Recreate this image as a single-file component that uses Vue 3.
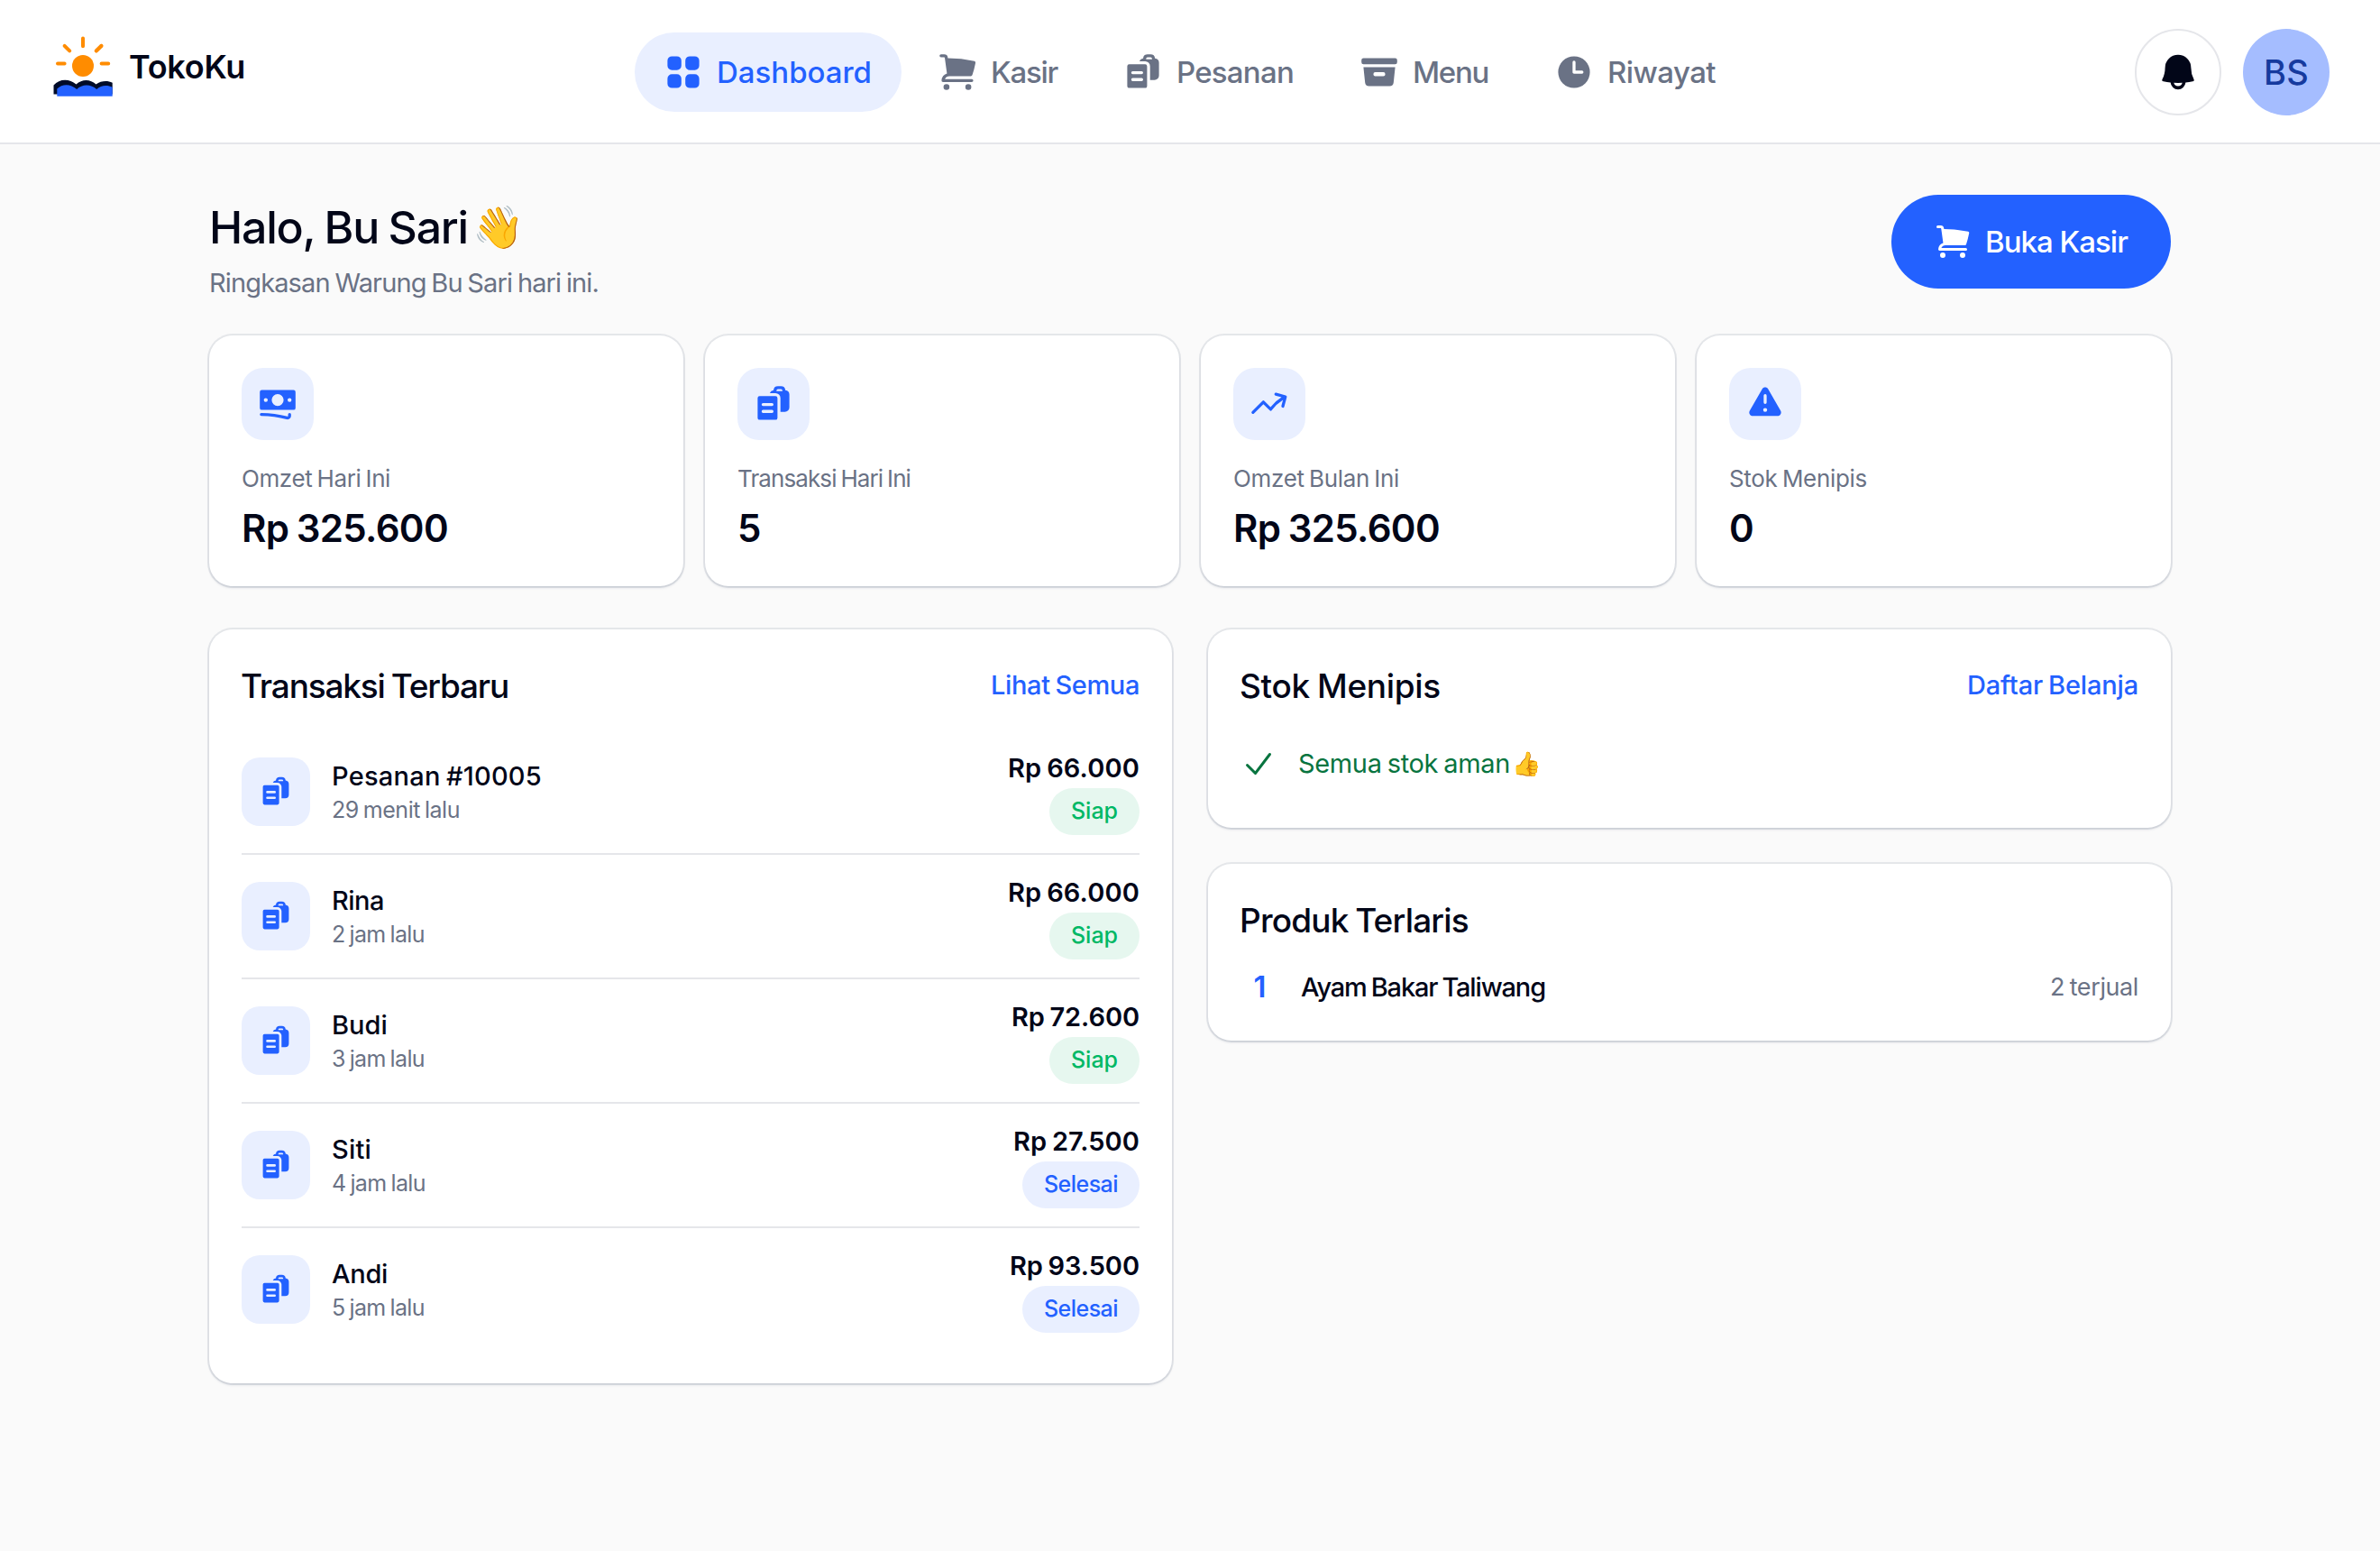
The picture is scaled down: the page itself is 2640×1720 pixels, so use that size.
<script setup>
const icons = {
  grid: 'M4.25 2A2.25 2.25 0 0 0 2 4.25v2.5A2.25 2.25 0 0 0 4.25 9h2.5A2.25 2.25 0 0 0 9 6.75v-2.5A2.25 2.25 0 0 0 6.75 2h-2.5ZM4.25 11A2.25 2.25 0 0 0 2 13.25v2.5A2.25 2.25 0 0 0 4.25 18h2.5A2.25 2.25 0 0 0 9 15.75v-2.5A2.25 2.25 0 0 0 6.75 11h-2.5ZM13.25 2A2.25 2.25 0 0 0 11 4.25v2.5A2.25 2.25 0 0 0 13.25 9h2.5A2.25 2.25 0 0 0 18 6.75v-2.5A2.25 2.25 0 0 0 15.75 2h-2.5ZM13.25 11A2.25 2.25 0 0 0 11 13.25v2.5A2.25 2.25 0 0 0 13.25 18h2.5A2.25 2.25 0 0 0 18 15.75v-2.5A2.25 2.25 0 0 0 15.75 11h-2.5Z',
  cart: 'M1 1.75A.75.75 0 0 1 1.75 1h1.628a1.75 1.75 0 0 1 1.734 1.51L5.18 3a65.25 65.25 0 0 1 13.36 1.412.75.75 0 0 1 .58.875 48.645 48.645 0 0 1-1.618 6.2.75.75 0 0 1-.712.513H6a2.503 2.503 0 0 0-2.292 1.5H17.25a.75.75 0 0 1 0 1.5H2.76a.75.75 0 0 1-.748-.807 4.002 4.002 0 0 1 2.716-3.486L3.626 2.716a.25.25 0 0 0-.248-.216H1.75A.75.75 0 0 1 1 1.75ZM6 17.5a1.5 1.5 0 1 1-3 0 1.5 1.5 0 0 1 3 0ZM15.5 19a1.5 1.5 0 1 0 0-3 1.5 1.5 0 0 0 0 3Z',
  orders: 'M15.988 3.012A2.25 2.25 0 0 1 18 5.25v6.5A2.25 2.25 0 0 1 15.75 14H13.5V7A2.5 2.5 0 0 0 11 4.5H8.128a2.252 2.252 0 0 1 1.884-1.488A2.25 2.25 0 0 1 12.25 1h1.5a2.25 2.25 0 0 1 2.238 2.012ZM11.5 3.25a.75.75 0 0 1 .75-.75h1.5a.75.75 0 0 1 .75.75v.25h-3v-.25ZM2 7a1 1 0 0 1 1-1h8a1 1 0 0 1 1 1v10a1 1 0 0 1-1 1H3a1 1 0 0 1-1-1V7Zm2 3.25a.75.75 0 0 1 .75-.75h4.5a.75.75 0 0 1 0 1.5h-4.5a.75.75 0 0 1-.75-.75Zm0 3.5a.75.75 0 0 1 .75-.75h4.5a.75.75 0 0 1 0 1.5h-4.5a.75.75 0 0 1-.75-.75Z',
  box: 'M2 3a1 1 0 0 0-1 1v1a1 1 0 0 0 1 1h16a1 1 0 0 0 1-1V4a1 1 0 0 0-1-1H2ZM2 7.5h16l-.811 7.71a2 2 0 0 1-1.99 1.79H4.802a2 2 0 0 1-1.99-1.79L2 7.5ZM7 11a1 1 0 0 1 1-1h4a1 1 0 1 1 0 2H8a1 1 0 0 1-1-1Z',
  clock: 'M10 18a8 8 0 1 0 0-16 8 8 0 0 0 0 16Zm.75-13a.75.75 0 0 0-1.5 0v5c0 .414.336.75.75.75h4a.75.75 0 0 0 0-1.5h-3.25V5Z',
  bell: 'M10 2a6 6 0 0 0-6 6c0 1.887-.454 3.665-1.257 5.234a.75.75 0 0 0 .515 1.076 32.91 32.91 0 0 0 3.256.508 3.5 3.5 0 0 0 6.972 0 32.903 32.903 0 0 0 3.256-.508.75.75 0 0 0 .515-1.076A11.448 11.448 0 0 1 16 8a6 6 0 0 0-6-6ZM8.05 14.943a33.54 33.54 0 0 0 3.9 0 2 2 0 0 1-3.9 0Z',
  cash: 'M1 4a1 1 0 0 1 1-1h16a1 1 0 0 1 1 1v8a1 1 0 0 1-1 1H2a1 1 0 0 1-1-1V4Zm12 4a3 3 0 1 1-6 0 3 3 0 0 1 6 0ZM4 9a1 1 0 1 0 0-2 1 1 0 0 0 0 2Zm13-1a1 1 0 1 1-2 0 1 1 0 0 1 2 0ZM1.75 14.5a.75.75 0 0 0 0 1.5c4.417 0 8.693.603 12.749 1.73 1.111.309 2.251-.512 2.251-1.696v-.784a.75.75 0 0 0-1.5 0v.784a.272.272 0 0 1-.35.25A49.043 49.043 0 0 0 1.75 14.5Z',
  trend: 'M12.577 4.878a.75.75 0 0 1 .919-.53l4.78 1.281a.75.75 0 0 1 .531.919l-1.281 4.78a.75.75 0 0 1-1.449-.387l.81-3.022a19.407 19.407 0 0 0-5.594 5.203.75.75 0 0 1-1.139.093L7 10.06l-4.72 4.72a.75.75 0 0 1-1.06-1.061l5.25-5.25a.75.75 0 0 1 1.06 0l3.074 3.073a20.923 20.923 0 0 1 5.545-4.931l-3.042-.815a.75.75 0 0 1-.53-.919Z',
  warning: 'M8.485 2.495c.673-1.167 2.357-1.167 3.03 0l6.28 10.875c.673 1.167-.17 2.625-1.516 2.625H3.72c-1.347 0-2.189-1.458-1.515-2.625L8.485 2.495ZM10 5a.75.75 0 0 1 .75.75v3.5a.75.75 0 0 1-1.5 0v-3.5A.75.75 0 0 1 10 5Zm0 9a1 1 0 1 0 0-2 1 1 0 0 0 0 2Z',
  check: 'M16.704 4.153a.75.75 0 0 1 .143 1.052l-8 10.5a.75.75 0 0 1-1.127.075l-4.5-4.5a.75.75 0 0 1 1.06-1.06l3.894 3.893 7.48-9.817a.75.75 0 0 1 1.05-.143Z',
}

const nav = [
  { label: 'Dashboard', icon: 'grid', width: 172, active: true },
  { label: 'Kasir', icon: 'cart', width: 74 },
  { label: 'Pesanan', icon: 'orders', width: 130 },
  { label: 'Menu', icon: 'box', width: 84 },
  { label: 'Riwayat', icon: 'clock', width: 120 },
]

const stats = [
  { label: 'Omzet Hari Ini', value: 'Rp 325.600', icon: 'cash', labelWidth: 165, valueWidth: 229 },
  { label: 'Transaksi Hari Ini', value: '5', icon: 'orders', labelWidth: 192, valueWidth: 26 },
  { label: 'Omzet Bulan Ini', value: 'Rp 325.600', icon: 'trend', labelWidth: 184, valueWidth: 229 },
  { label: 'Stok Menipis', value: '0', icon: 'warning', labelWidth: 153, valueWidth: 28 },
]

const orders = [
  { name: 'Pesanan #10005', time: '29 menit lalu', total: 'Rp 66.000', status: 'Siap', widths: [233, 142, 146, 52] },
  { name: 'Rina', time: '2 jam lalu', total: 'Rp 66.000', status: 'Siap', widths: [58, 103, 146, 52] },
  { name: 'Budi', time: '3 jam lalu', total: 'Rp 72.600', status: 'Siap', widths: [62, 103, 142, 52] },
  { name: 'Siti', time: '4 jam lalu', total: 'Rp 27.500', status: 'Selesai', widths: [44, 104, 140, 82] },
  { name: 'Andi', time: '5 jam lalu', total: 'Rp 93.500', status: 'Selesai', widths: [62, 103, 144, 82] },
]

// Tracks a label so that it occupies the given width in pixels.
const vFit = {
  mounted(el, { value }) {
    const natural = el.getBoundingClientRect().width
    el.style.letterSpacing = `${(value - natural) / el.textContent.length}px`
  },
}
</script>

<template>
  <div class="page">
    <header class="topbar">
      <div class="brand">
        <svg class="logo" viewBox="56 38 72 72">
          <g stroke="#ff8c00" stroke-width="4" stroke-linecap="round">
            <path d="M92 42.600v8.600M64 70.600h7.600M112.600 70.600h7.600M71.600 50.800l5.600 5.600M112.400 50.800l-5.600 5.600" />
            <path d="M112.400 50.800l-5.600 5.600" />
          </g>
          <circle cx="92" cy="73" r="12" fill="#ff8c00" />
          <path fill="#000b28" d="M59.500 104.500V94.500C66 87 77 87 84.500 93.500C91 87.500 100 87.500 106.500 93.500C112 89.500 119 89 124.700 91.700V104.500Z" />
          <path fill="#2361ff" d="M63.300 106.700V98.500C69 93 78 92.500 85.200 99C91 93 101 93 107.200 99C112 94.500 119 94 124.700 96.800V106.700Z" />
        </svg>
        <span v-fit="129" class="brand-name">TokoKu</span>
      </div>
      <nav class="nav">
        <a v-for="item in nav" :key="item.label" class="nav-item" :class="{ active: item.active }">
          <svg class="icon-44" viewBox="0 0 20 20"><path :d="icons[item.icon]" /></svg>
          <span v-fit="item.width">{{ item.label }}</span>
        </a>
      </nav>
      <div class="actions">
        <button class="bell"><svg class="icon-48" viewBox="0 0 20 20"><path :d="icons.bell" /></svg></button>
        <span class="avatar"><span v-fit="50">BS</span></span>
      </div>
    </header>

    <main class="main">
      <section class="intro">
        <div>
          <h1 class="greeting"><span v-fit="287">Halo, Bu Sari</span><span class="emoji wave">👋</span></h1>
          <p class="summary"><span v-fit="432">Ringkasan Warung Bu Sari hari ini.</span></p>
        </div>
        <button class="cta">
          <svg class="icon-40" viewBox="0 0 20 20"><path :d="icons.cart" /></svg>
          <span v-fit="158">Buka Kasir</span>
        </button>
      </section>

      <section class="stats">
        <article v-for="stat in stats" :key="stat.label" class="card stat">
          <div class="stat-icon"><svg class="icon-44" viewBox="0 0 20 20"><path :d="icons[stat.icon]" /></svg></div>
          <div class="stat-label"><span v-fit="stat.labelWidth">{{ stat.label }}</span></div>
          <div class="stat-value"><span v-fit="stat.valueWidth">{{ stat.value }}</span></div>
        </article>
      </section>

      <section class="columns">
        <article class="card">
          <div class="card-head">
            <h2><span v-fit="297">Transaksi Terbaru</span></h2>
            <a class="link"><span v-fit="165">Lihat Semua</span></a>
          </div>
          <ul class="orders">
            <li v-for="order in orders" :key="order.name" class="order">
              <div class="order-icon"><svg class="icon-36" viewBox="0 0 20 20"><path :d="icons.orders" /></svg></div>
              <div class="order-info">
                <div class="order-name"><span v-fit="order.widths[0]">{{ order.name }}</span></div>
                <div class="order-time"><span v-fit="order.widths[1]">{{ order.time }}</span></div>
              </div>
              <div class="order-side">
                <div class="order-total"><span v-fit="order.widths[2]">{{ order.total }}</span></div>
                <div class="badge" :class="{ ready: order.status === 'Siap' }"><span v-fit="order.widths[3]">{{ order.status }}</span></div>
              </div>
            </li>
          </ul>
        </article>

        <div class="side">
          <article class="card stock">
            <div class="card-head">
              <h2><span v-fit="223">Stok Menipis</span></h2>
              <a class="link"><span v-fit="190">Daftar Belanja</span></a>
            </div>
            <div class="stock-ok">
              <svg class="icon-40" viewBox="0 0 20 20"><path :d="icons.check" /></svg>
              <span v-fit="235" class="stock-text">Semua stok aman</span><span class="emoji thumb">👍</span>
            </div>
          </article>
          <article class="card best">
            <h2><span v-fit="254">Produk Terlaris</span></h2>
            <div class="product">
              <span class="rank">1</span>
              <span class="product-name"><span v-fit="271">Ayam Bakar Taliwang</span></span>
              <span class="sold"><span v-fit="98">2 terjual</span></span>
            </div>
          </article>
        </div>
      </section>
    </main>
  </div>
</template>

<style>
body {
  background: #fafafa;
}
</style>

<style scoped>
.page {
  width: 2640px;
  height: 1720px;
  overflow: hidden;
  background: #fafafa;
  color: #020618;
  font-family: Inter, "Liberation Sans", sans-serif;
  font-weight: 400;
  white-space: nowrap;
  word-spacing: -0.1em;
}
.page * {
  box-sizing: border-box;
}
h1, h2, p, ul {
  margin: 0;
  padding: 0;
  list-style: none;
}
button {
  border: 0;
  padding: 0;
  background: none;
  font: inherit;
  color: inherit;
}
svg {
  flex: none;
  display: block;
  fill: currentColor;
  fill-rule: evenodd;
}
.icon-36 { width: 36px; height: 36px; }
.icon-40 { width: 40px; height: 40px; }
.icon-44 { width: 44px; height: 44px; }
.icon-48 { width: 48px; height: 48px; }

.topbar {
  display: grid;
  grid-template-columns: 1fr auto 1fr;
  align-items: center;
  height: 160px;
  padding: 2px 56px 0;
  background: #fff;
  border-bottom: 2px solid #e5e6ea;
}
.brand {
  display: flex;
  align-items: center;
  gap: 15px;
  padding-bottom: 12px;
}
.logo { width: 72px; height: 72px; }
.brand-name {
  font-size: 36px;
  font-weight: 600;
  line-height: 48px;
}
.nav {
  display: flex;
  gap: 8px;
}
.nav-item {
  display: flex;
  align-items: center;
  gap: 16px;
  height: 88px;
  padding: 0 32px;
  border-radius: 44px;
  color: #6a7285;
  font-size: 33px;
  font-weight: 450;
}
.nav-item span {
  margin: 0 1px 0 -1px;
}
.nav-item.active {
  background: #e9efff;
  color: #2361ff;
  font-weight: 500;
}
.actions {
  display: flex;
  justify-content: flex-end;
  gap: 24px;
}
.bell, .avatar {
  display: flex;
  align-items: center;
  justify-content: center;
  width: 96px;
  height: 96px;
  border-radius: 50%;
}
.bell {
  border: 2px solid #e5e6ea;
}
.avatar {
  background: #a5bdff;
  color: #163a9e;
  font-size: 38px;
  font-weight: 500;
}

.main {
  padding: 56px 232px 0;
}
.intro {
  display: flex;
  justify-content: space-between;
  height: 156px;
}
.greeting {
  display: flex;
  align-items: center;
  height: 71px;
  font-size: 50px;
  font-weight: 550;
}
.summary {
  height: 53px;
  font-size: 29px;
  line-height: 53px;
  color: #6a7285;
}
.emoji {
  font-family: "Noto Color Emoji", "Apple Color Emoji", sans-serif;
}
.wave {
  margin-left: 5px;
  font-size: 46px;
}
.cta {
  display: flex;
  align-items: center;
  gap: 16px;
  height: 104px;
  padding: 0 48px;
  border-radius: 52px;
  background: #2361ff;
  color: #fff;
  font-size: 33px;
  font-weight: 550;
}

.card {
  padding: 36px;
  border-radius: 26px;
  background: #fff;
  box-shadow: 0 0 0 2px rgba(20, 40, 80, 0.09), 0 2px 3px rgba(20, 40, 80, 0.13);
}
.stats {
  display: grid;
  grid-template-columns: repeat(4, 1fr);
  gap: 24px;
}
.stat {
  height: 278px;
}
.stat-icon, .order-icon {
  display: flex;
  align-items: center;
  justify-content: center;
  background: #e9efff;
  color: #2361ff;
}
.stat-icon {
  width: 80px;
  height: 80px;
  border-radius: 24px;
}
.stat-label {
  margin-top: 24px;
  font-size: 26px;
  line-height: 38px;
  color: #6a7285;
}
.stat-value {
  margin-top: 11px;
  font-size: 42px;
  font-weight: 600;
  line-height: 50px;
}

.columns {
  display: grid;
  grid-template-columns: 1fr 1fr;
  gap: 40px;
  margin-top: 48px;
}
.card-head {
  display: flex;
  justify-content: space-between;
  height: 76px;
}
h2 {
  margin-left: -1px;
  font-size: 37px;
  font-weight: 550;
  line-height: 53px;
}
.link {
  font-size: 29px;
  font-weight: 500;
  line-height: 51px;
  color: #2361ff;
}
.order {
  display: flex;
  align-items: center;
  height: 138px;
  border-bottom: 2px solid #e5e6ea;
}
.order:last-child {
  height: 136px;
  border-bottom: 0;
}
.order-icon {
  width: 76px;
  height: 76px;
  border-radius: 20px;
}
.order-info {
  margin-left: 24px;
}
.order-name {
  font-size: 29px;
  font-weight: 550;
  line-height: 39px;
}
.order-time {
  font-size: 25px;
  line-height: 36px;
  color: #6a7285;
}
.order-side {
  display: flex;
  flex-direction: column;
  align-items: flex-end;
  margin-left: auto;
}
.order-total {
  font-size: 29px;
  font-weight: 600;
  line-height: 44px;
}
.badge {
  height: 52px;
  padding: 0 24px;
  border-radius: 26px;
  background: #e9efff;
  color: #2361ff;
  font-size: 25px;
  font-weight: 500;
  line-height: 51px;
}
.badge.ready {
  background: #e6f7ef;
  color: #00b865;
}

.side {
  display: flex;
  flex-direction: column;
  gap: 40px;
}
.stock {
  height: 220px;
}
.stock-ok {
  display: flex;
  align-items: center;
  height: 73px;
  color: #08743f;
}
.stock-text {
  margin-left: 24px;
  font-size: 29px;
}
.thumb {
  margin-left: 2px;
  font-size: 26px;
}
.best {
  height: 196px;
}
.product {
  display: flex;
  align-items: center;
  height: 94px;
}
.rank {
  width: 43px;
  text-align: center;
  font-size: 33px;
  font-weight: 600;
  color: #2361ff;
}
.product-name {
  margin-left: 24px;
  font-size: 29px;
  font-weight: 500;
}
.sold {
  margin-left: auto;
  font-size: 27px;
  color: #6a7285;
}
</style>
